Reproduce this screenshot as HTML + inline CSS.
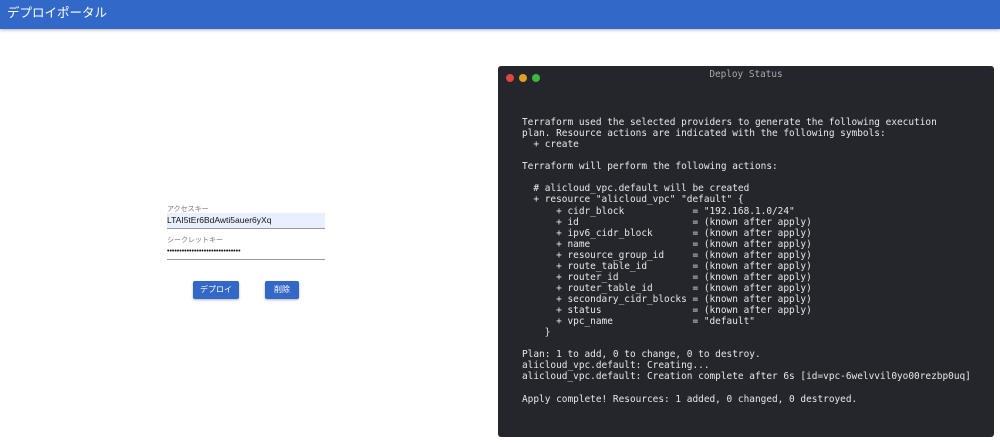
<!DOCTYPE html>
<html><head><meta charset="utf-8"><style>
body{margin:0;width:1000px;height:443px;background:#fff;position:relative;overflow:hidden;font-family:"Liberation Sans","Noto Sans CJK JP",sans-serif}
.hdr{position:absolute;left:0;top:0;width:1000px;height:29px;background:#3268c8;box-shadow:0 1px 3px rgba(0,0,0,.3);color:#fff;font-size:12.5px;line-height:26px;text-indent:7px}
.lbl{position:absolute;left:167px;font-size:7px;color:#777}
.inp{position:absolute;left:167px;width:158px;height:15px;font-size:8.5px;line-height:15px;color:#111;border-bottom:1px solid #999}
.btn{position:absolute;top:281px;height:18px;background:#3468c6;color:#fff;font-size:8px;line-height:18px;text-align:center;border-radius:2px;box-shadow:0 1px 2px rgba(0,0,0,.3)}
.term{position:absolute;left:498px;top:66px;width:496px;height:371px;background:#24262c;border-radius:3px}
.dot{position:absolute;top:8px;width:8px;height:8px;border-radius:50%}
.title{position:absolute;left:0;width:496px;top:3px;text-align:center;color:#aaa;font:9.4px "DejaVu Sans Mono",monospace}
pre{position:absolute;left:24px;top:51px;margin:0;color:#e8e8e8;font:9.45px/11.07px "DejaVu Sans Mono",monospace}
</style></head><body>
<div class="hdr">デプロイポータル</div>
<div class="lbl" style="top:204px">アクセスキー</div>
<div class="inp" style="top:213px;background:#e8f0fe">LTAI5tEr6BdAwti5auer6yXq</div>
<div class="lbl" style="top:235px">シークレットキー</div>
<div class="inp" style="top:244px;font-size:7px">••••••••••••••••••••••••••••••</div>
<div class="btn" style="left:193px;width:46px">デプロイ</div>
<div class="btn" style="left:265px;width:34px">削除</div>
<div class="term">
<div class="dot" style="left:8px;background:#e0443e"></div>
<div class="dot" style="left:21px;background:#dea123"></div>
<div class="dot" style="left:34px;background:#3eb83b"></div>
<div class="title">Deploy Status</div>
<pre>Terraform used the selected providers to generate the following execution
plan. Resource actions are indicated with the following symbols:
  + create

Terraform will perform the following actions:

  # alicloud_vpc.default will be created
  + resource "alicloud_vpc" "default" {
      + cidr_block            = "192.168.1.0/24"
      + id                    = (known after apply)
      + ipv6_cidr_block       = (known after apply)
      + name                  = (known after apply)
      + resource_group_id     = (known after apply)
      + route_table_id        = (known after apply)
      + router_id             = (known after apply)
      + router_table_id       = (known after apply)
      + secondary_cidr_blocks = (known after apply)
      + status                = (known after apply)
      + vpc_name              = "default"
    }

Plan: 1 to add, 0 to change, 0 to destroy.
alicloud_vpc.default: Creating...
alicloud_vpc.default: Creation complete after 6s [id=vpc-6welvvil0yo00rezbp0uq]

Apply complete! Resources: 1 added, 0 changed, 0 destroyed.</pre>
</div>
</body></html>
